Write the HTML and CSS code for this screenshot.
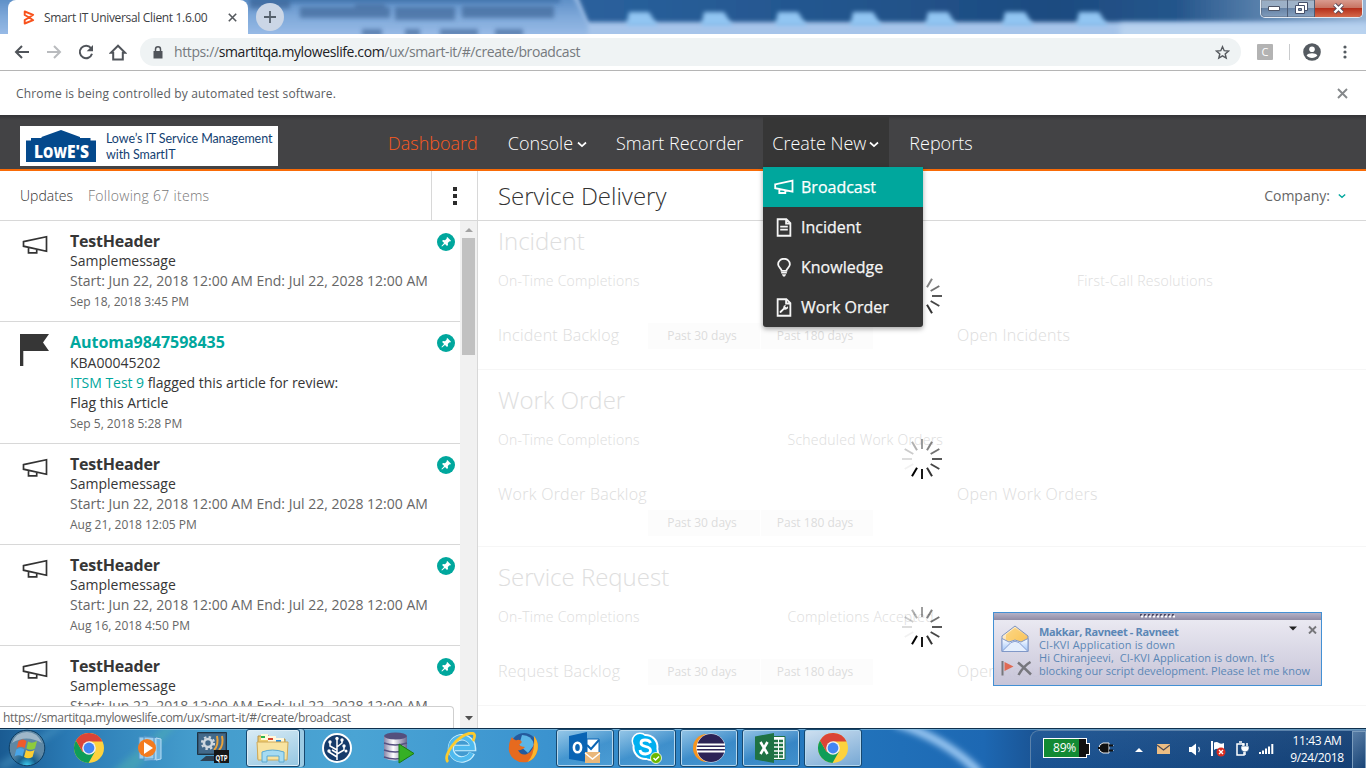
FILE: index.html
```html
<!DOCTYPE html>
<html lang="en">
<head>
<meta charset="utf-8">
<title>Smart IT Universal Client 1.6.00</title>
<link rel="stylesheet" href="styles.css">
</head>
<body>
<svg class="defs" width="0" height="0">
  <defs>
    <symbol id="horn" viewBox="0 0 26 20"><path d="M1.500 6.600 24.500 1.700v14.600L1.500 11.200zM6.500 12.400v5.400h8.200v-3.400" fill="none" stroke="currentColor" stroke-width="1.700"/></symbol>
    <symbol id="hornb" viewBox="0 0 20 16"><path d="M1.200 5.300 18.500 1.700v11L1.200 9.200zM5.300 10v4h6v-2.500" fill="none" stroke="currentColor" stroke-width="1.800"/></symbol>
    <symbol id="flag" viewBox="0 0 30 32"><path d="M0 0h29l-6 8.500 6 8.500H3.300V32H0z" fill="currentColor"/></symbol>
    <symbol id="pin" viewBox="0 0 18 18"><circle cx="9" cy="9" r="9" fill="#00a79d"/><path d="m10.300 4 3.700 3.700-.8.8-.7-.2-1.700 1.800.2 1.900-1 .9-2-2L5 13.600l-.6-.6 2.700-3-2-2 .9-.9 2 .2 1.800-1.700-.3-.7z" fill="#fff"/></symbol>
    <symbol id="doc" viewBox="0 0 16 20"><path d="M1.300 1.300h9.200l4.200 4.200v13.200H1.300zM10.200 1.500v4.300h4.300M4 9h8M4 12.300h8" fill="none" stroke="currentColor" stroke-width="1.900"/></symbol>
    <symbol id="wrench" viewBox="0 0 16 20"><path d="M1.300 1.300h9.200l4.200 4.200v13.200H1.300zM10.200 1.500v4.300h4.300" fill="none" stroke="currentColor" stroke-width="1.900"/><path d="m4.300 14.700 4.500-4.300" stroke="currentColor" stroke-width="2" stroke-linecap="round"/><path d="M12 8.800a2.500 2.500 0 1 1-2-1.500L9.200 9l1.200 1z" fill="currentColor"/></symbol>
    <symbol id="bulb" viewBox="0 0 16 20"><path d="M5.500 13.500c0-2.500-3.700-3.500-3.700-7a6.200 5.700 0 0 1 12.400 0c0 3.500-3.700 4.500-3.700 7z" fill="none" stroke="currentColor" stroke-width="1.900"/><path d="M5 14.800h6v1.600H5zM5.700 17.200h4.600L9 19.500H7z" fill="currentColor"/></symbol>
    <symbol id="chev" viewBox="0 0 10 7"><path d="m1 1.500 4 3.600 4-3.600" fill="none" stroke="currentColor" stroke-width="1.700"/></symbol>
    <symbol id="spin" viewBox="-21 -21 42 42">
      <g stroke="#000" stroke-width="2">
        <path d="M0-20v10" opacity=".38"/><path d="M0-20v10" opacity=".48" transform="rotate(30)"/>
        <path d="M0-20v10" opacity=".55" transform="rotate(60)"/><path d="M0-20v10" opacity=".65" transform="rotate(90)"/>
        <path d="M0-20v10" opacity=".72" transform="rotate(120)"/><path d="M0-20v10" opacity=".8" transform="rotate(150)"/>
        <path d="M0-20v10" opacity=".9" transform="rotate(180)"/><path d="M0-20v10" transform="rotate(210)"/>
        <path d="M0-20v10" opacity=".05" transform="rotate(240)"/><path d="M0-20v10" opacity=".13" transform="rotate(270)"/>
        <path d="M0-20v10" opacity=".2" transform="rotate(300)"/><path d="M0-20v10" opacity=".3" transform="rotate(330)"/>
      </g>
    </symbol>
    <symbol id="chrome" viewBox="0 0 30 30">
      <circle cx="15" cy="15" r="15" fill="#fdd23e"/>
      <path d="M2 7.500A15 15 0 0 0 14.500 30l6.500-11.500-6-3.500-6.500 3.700z" fill="#0f9d58"/>
      <path d="M2 7.500 8.500 18.700 15 15V8.500h13.500A15 15 0 0 0 2 7.500z" fill="#db4437"/>
      <circle cx="15" cy="15" r="6.800" fill="#f1f1f1"/><circle cx="15" cy="15" r="5.400" fill="#4285f4"/>
    </symbol>
  </defs>
</svg>
<div class="screen">
  <header class="titlebar">
    <svg class="glass" viewBox="0 0 1366 34" width="1366" height="34">
      <defs>
        <filter id="b3" x="-5%" y="-50%" width="110%" height="200%"><feGaussianBlur stdDeviation="3"/></filter>
        <filter id="b2" x="-5%" y="-50%" width="110%" height="200%"><feGaussianBlur stdDeviation="2"/></filter>
        <linearGradient id="gd"><stop offset="0" stop-color="#2a619d"/><stop offset=".6" stop-color="#1d4b80"/><stop offset=".75" stop-color="#24558b"/><stop offset=".86" stop-color="#5a82ad"/><stop offset="1" stop-color="#9db9d8"/></linearGradient>
        <linearGradient id="gl" x2="0" y2="1"><stop offset="0" stop-color="#4d82bd"/><stop offset=".5" stop-color="#7fa9da"/><stop offset="1" stop-color="#a5c4ec"/></linearGradient>
      </defs>
      <path d="M0 0h1366v34H0z" fill="#a6c4ea"/>
      <path d="M575-10h801v32H588z" fill="url(#gd)" filter="url(#b2)"/>
      <path d="M-10-10h580l18 34v20H-10z" fill="url(#gl)" filter="url(#b2)"/>
      <path d="M250-6h310v9H250z" fill="#3f6fa8" filter="url(#b2)" opacity=".8"/>
      <g fill="#375f91" filter="url(#b2)" opacity=".6">
        <path d="M250 0h40v9h-40zM300 7h90v11h-90zM355 4h30v14h-30zM395 7h60v13h-60zM462 6h92v12h-92zM362 29h20v7h-20zM405 29h15v7h-15zM440 29h38v7h-38zM495 29h28v7h-28z"/>
      </g>
      <g fill="#91c5f2" filter="url(#b2)">
        <path d="m629 12h20l9 14h-32zM704 12h20l9 14h-32zM778 12h20l9 14h-32zM853 12h20l9 14h-32zM928 12h20l9 14h-32zM1005 12h20l9 14h-32zM1079 12h20l9 14h-32z"/>
      </g>
      <path d="M1120 24h250v20h-250z" fill="#b9d3ef" filter="url(#b3)"/>
    </svg>
    <div class="tab">
      <svg class="fav" width="12" height="15" viewBox="0 0 12 15"><path d="M1.700 1.500v3.500l4.500 2.500-4.500 2.500v3.500l8.500-3.300-4-2.700 4-2.700z" fill="none" stroke="#f8521c" stroke-width="1.900" stroke-linejoin="round"/></svg>
      <span class="tab-title">Smart IT Universal Client 1.6.00</span>
      <svg width="9" height="9" viewBox="0 0 9 9"><path d="m.8.8 7.400 7.400M8.200.8.800 8.200" stroke="#55595e" stroke-width="1.600"/></svg>
    </div>
    <span class="newtab"><svg width="14" height="14" viewBox="0 0 14 14"><path d="M7 1v12M1 7h12" stroke="#55606c" stroke-width="1.800"/></svg></span>
    <div class="winbtns">
      <span class="wb"><svg width="12" height="6" viewBox="0 0 12 6"><path d="M.5.500h11v4H.5z" fill="#fff" stroke="#4d5466"/></svg></span>
      <span class="wb"><svg width="13" height="13" viewBox="0 0 13 13"><path d="M3.500.5h9v8h-9z" fill="#fff" stroke="#46506a"/><path d="M.5 3.500h9v8h-9z" fill="#fff" stroke="#46506a"/><path d="M3.500 6.500h3v2h-3z" fill="#7e93ab" stroke="#46506a"/></svg></span>
      <span class="wb close"><svg width="13" height="11" viewBox="0 0 13 11"><path d="m2.500 1.500 8 8M10.500 1.500l-8 8" stroke="#56495a" stroke-width="4.200"/><path d="m2.500 1.500 8 8M10.500 1.500l-8 8" stroke="#fff" stroke-width="2.400"/></svg></span>
    </div>
  </header>

  <div class="toolbar">
    <svg class="ti" width="16" height="14" viewBox="0 0 16 14"><path d="M15 7H2M8 1 2 7l6 6" fill="none" stroke="#50545a" stroke-width="2"/></svg>
    <svg class="ti" width="16" height="14" viewBox="0 0 16 14"><path d="M1 7h13M8 1l6 6-6 6" fill="none" stroke="#b9bbbe" stroke-width="2"/></svg>
    <svg class="ti" width="16" height="16" viewBox="0 0 16 16"><path d="M13 4.200A6.200 6.200 0 1 0 14 9.800" fill="none" stroke="#50545a" stroke-width="2"/><path d="M15 1v6.200H8.700z" fill="#50545a"/></svg>
    <svg class="ti" width="18" height="17" viewBox="0 0 18 17"><path d="M9 1.700 1.800 8.800h2.400V15.500h9.600V8.800h2.400z" fill="none" stroke="#50545a" stroke-width="2"/></svg>
    <div class="omni">
      <svg width="10" height="13" viewBox="0 0 10 13"><path d="M1 5h8.500v7.500H.5V5z" fill="#50545a"/><path d="M2.500 5.500V3.300a2.500 2.500 0 0 1 5 0v2.200" fill="none" stroke="#50545a" stroke-width="1.500"/></svg>
      <span class="url">https://<b>smartitqa.myloweslife.com</b>/ux/smart-it/#/create/broadcast</span>
      <svg class="star" width="15" height="15" viewBox="0 0 15 15"><path d="m7.500 1.700 1.700 4 4.300.4-3.300 2.800 1 4.200-3.700-2.200-3.700 2.200 1-4.200L1.500 6.100l4.300-.4z" fill="none" stroke="#55595e" stroke-width="1.400"/></svg>
    </div>
    <span class="ext">C</span>
    <span class="vsep"></span>
    <svg class="avatar" width="18" height="18" viewBox="0 0 18 18"><circle cx="9" cy="9" r="8.800" fill="#555b61"/><circle cx="9" cy="6.300" r="2.800" fill="#fff"/><path d="M3.600 12.500c1.500-3 9.300-3 10.800 0-2.400 3.300-8.400 3.300-10.800 0z" fill="#fff"/></svg>
    <svg width="4" height="14" viewBox="0 0 4 14" fill="#555b61"><circle cx="2" cy="2" r="1.600"/><circle cx="2" cy="7" r="1.600"/><circle cx="2" cy="12" r="1.600"/></svg>
  </div>

  <div class="infobar">
    <span class="info-text">Chrome is being controlled by automated test software.</span>
    <svg width="11" height="11" viewBox="0 0 11 11"><path d="m1 1 9 9M10 1l-9 9" stroke="#85888b" stroke-width="1.900"/></svg>
  </div>

  <div class="apphead">
    <div class="logo">
      <svg width="70" height="32" viewBox="0 0 70 32"><path d="M0 10.500h5V8h10.500V7L35 0l19 7v1h10.500v2.500H70V32H0z" fill="#04498c"/><text x="8" y="27.500" class="lowes" textLength="55" lengthAdjust="spacingAndGlyphs">L<tspan class="sm">OW</tspan>E'S</text></svg>
      <p class="logotext">Lowe’s IT Service Management<br>with SmartIT</p>
    </div>
    <nav class="nav">
      <a class="on">Dashboard</a>
      <a>Console<svg width="10" height="7"><use href="#chev"/></svg></a>
      <a class="rec">Smart Recorder</a>
      <a class="open">Create New<svg width="10" height="7"><use href="#chev"/></svg></a>
      <a>Reports</a>
    </nav>
    <ul class="menu">
      <li class="hot"><svg width="20" height="16"><use href="#hornb"/></svg>Broadcast</li>
      <li><svg width="20" height="19"><use href="#doc"/></svg>Incident</li>
      <li><svg width="20" height="19"><use href="#bulb"/></svg>Knowledge</li>
      <li><svg width="20" height="19"><use href="#wrench"/></svg>Work Order</li>
    </ul>
  </div>

  <main class="main">
    <section class="left">
      <div class="subhead">
        <span class="upd">Updates</span><span class="fol">Following 67 items</span>
        <span class="kebab"><i></i><i></i><i></i></span>
      </div>
      <div class="feedwrap">
        <div class="feed">
          <article class="item"><svg class="fi" width="26" height="20"><use href="#horn"/></svg><div class="txt"><h3>TestHeader</h3><p>Samplemessage</p><p class="g">Start: Jun 22, 2018 12:00 AM End: Jul 22, 2028 12:00 AM</p><p class="t">Sep 18, 2018 3:45 PM</p></div><svg class="pin" width="18" height="18"><use href="#pin"/></svg></article>
          <article class="item kb"><svg class="fl" width="30" height="32"><use href="#flag"/></svg><div class="txt"><h3 class="teal">Automa9847598435</h3><p>KBA00045202</p><p class="rev"><span class="teal">ITSM Test 9</span> flagged this article for review:</p><p>Flag this Article</p><p class="t">Sep 5, 2018 5:28 PM</p></div><svg class="pin" width="18" height="18"><use href="#pin"/></svg></article>
          <article class="item"><svg class="fi" width="26" height="20"><use href="#horn"/></svg><div class="txt"><h3>TestHeader</h3><p>Samplemessage</p><p class="g">Start: Jun 22, 2018 12:00 AM End: Jul 22, 2028 12:00 AM</p><p class="t">Aug 21, 2018 12:05 PM</p></div><svg class="pin" width="18" height="18"><use href="#pin"/></svg></article>
          <article class="item"><svg class="fi" width="26" height="20"><use href="#horn"/></svg><div class="txt"><h3>TestHeader</h3><p>Samplemessage</p><p class="g">Start: Jun 22, 2018 12:00 AM End: Jul 22, 2028 12:00 AM</p><p class="t">Aug 16, 2018 4:50 PM</p></div><svg class="pin" width="18" height="18"><use href="#pin"/></svg></article>
          <article class="item"><svg class="fi" width="26" height="20"><use href="#horn"/></svg><div class="txt"><h3>TestHeader</h3><p>Samplemessage</p><p class="g">Start: Jun 22, 2018 12:00 AM End: Jul 22, 2028 12:00 AM</p></div><svg class="pin" width="18" height="18"><use href="#pin"/></svg></article>
        </div>
        <div class="scroll">
          <svg width="8" height="4" viewBox="0 0 8 4"><path d="M0 4h8L4 0z" fill="#a3a3a3"/></svg>
          <span class="thumb"></span>
          <svg class="dn" width="8" height="5" viewBox="0 0 8 5"><path d="M0 0h8L4 4.500z" fill="#505050"/></svg>
        </div>
      </div>
      <div class="status">https://smartitqa.myloweslife.com/ux/smart-it/#/create/broadcast</div>
    </section>

    <section class="right">
      <div class="subhead r"><h1>Service Delivery</h1><span class="comp">Company:<svg width="8" height="6"><use href="#chev"/></svg></span></div>
      <div class="sec s1">
        <h2>Incident</h2>
        <div class="metrics"><span>On-Time Completions</span><span>Incidents Resolved</span><span>First-Call Resolutions</span></div>
        <div class="backlog"><span class="bt">Incident Backlog</span><span class="btns"><i>Past 30 days</i><i>Past 180 days</i></span><span class="opn">Open Incidents</span></div>
        <svg class="spin" width="42" height="42"><use href="#spin"/></svg>
      </div>
      <div class="sec s2">
        <h2>Work Order</h2>
        <div class="metrics"><span>On-Time Completions</span><span>Scheduled Work Orders</span></div>
        <div class="backlog wrap"><span class="bt">Work Order Backlog</span><span class="btns"><i>Past 30 days</i><i>Past 180 days</i></span><span class="opn">Open Work Orders</span></div>
        <svg class="spin" width="42" height="42"><use href="#spin"/></svg>
      </div>
      <div class="sec s3">
        <h2>Service Request</h2>
        <div class="metrics"><span>On-Time Completions</span><span>Completions Accepted</span></div>
        <div class="backlog"><span class="bt">Request Backlog</span><span class="btns"><i>Past 30 days</i><i>Past 180 days</i></span><span class="opn">Open Requests</span></div>
        <svg class="spin" width="42" height="42"><use href="#spin"/></svg>
      </div>
    </section>
  </main>

  <aside class="toast">
    <div class="grip"><svg width="35" height="4" viewBox="0 0 35 4"><path d="M0 1h35" stroke="#4e4a64" stroke-width="2" stroke-dasharray="2 2"/><path d="M1 2.500h35" stroke="#fff" stroke-width="2" stroke-dasharray="2 2"/></svg></div>
    <div class="tbody">
      <div class="ticons">
        <svg width="28" height="28" viewBox="0 0 28 28">
          <defs><linearGradient id="ev" x2="1" y2="1"><stop offset="0" stop-color="#fff"/><stop offset="1" stop-color="#f4a81d"/></linearGradient><linearGradient id="ev2" x2="0" y2="1"><stop offset="0" stop-color="#fff"/><stop offset="1" stop-color="#9cc4fb"/></linearGradient></defs>
          <path d="M1 11 14 1l13 10v15.500H1z" fill="url(#ev)" stroke="#7c93c0"/><path d="M5 9.500 14 3l9 6.500v6H5z" fill="#fbc95c" opacity=".7"/>
          <path d="M1 13.500 8 17l6-2 6 2 7-3.500v13H1z" fill="url(#ev2)" stroke="#8198c7"/><path d="M1.500 26 10 17.500q4-2.500 8 0l8.500 8.500" fill="#e4eefd" stroke="#869dd0"/></svg>
        <svg width="32" height="15" viewBox="0 0 32 15"><path d="M1.500 0v14.500" stroke="#77777b" stroke-width="2"/><path d="m3.500 1 9 4.500-9 4.500z" fill="#e06a53"/><path d="M17 1.500q6 5 13 12M29.500 1q-7 4-12 13" fill="none" stroke="#77777d" stroke-width="2.500"/></svg>
      </div>
      <div class="tmsg"><b>Makkar, Ravneet - Ravneet</b><span class="m1">CI-KVI Application is down</span><span class="m2">Hi Chiranjeevi,&nbsp; CI-KVI Application is down. It’s</span><span class="m3">blocking our script development. Please let me know</span></div>
      <svg class="tctl" width="28" height="9" viewBox="0 0 28 9"><path d="M0 1.500h8L4 5.500z" fill="#222"/><path d="m20 1.500 7 7M27 1.500l-7 7" stroke="#77777b" stroke-width="1.900"/></svg>
    </div>
  </aside>

  <footer class="taskbar">
    <svg class="wall" width="1366" height="40" viewBox="0 0 1366 40">
      <defs><filter id="w"><feGaussianBlur stdDeviation="3"/></filter>
      <linearGradient id="wg"><stop offset="0" stop-color="#1a5b92"/><stop offset=".05" stop-color="#2a7ab4"/><stop offset=".14" stop-color="#449ccc"/><stop offset=".26" stop-color="#4aa4d4"/><stop offset=".4" stop-color="#3b93cf"/><stop offset=".6" stop-color="#2376bd"/><stop offset=".72" stop-color="#1d68b3"/><stop offset=".76" stop-color="#1a5393"/><stop offset="1" stop-color="#123c70"/></linearGradient></defs>
      <path d="M0 0h1366v40H0z" fill="url(#wg)"/>
      <path d="m110 45 60-50 8 0-45 50z" fill="#53b6ae" opacity=".45" filter="url(#w)"/>
      <path d="m-5 38 60-40h10L5 42z" fill="#58a6ce" opacity=".4" filter="url(#w)"/>
      <path d="M895-5q50 15 85 50" fill="none" stroke="#a0ccf5" stroke-width="8" filter="url(#w)"/>
      <path d="M0 .5h1366" stroke="#0f304d"/><path d="M0 1.500h1366" stroke="#8ac0df" opacity=".7"/>
    </svg>
    <div class="apps">
      <span class="app start"><svg width="38" height="38" viewBox="0 0 38 38">
        <defs><radialGradient id="orb" cx=".5" cy="1"><stop offset="0" stop-color="#3fd2f3"/><stop offset=".5" stop-color="#19618f"/><stop offset="1" stop-color="#5f88a5"/></radialGradient></defs>
        <circle cx="19" cy="19" r="17.800" fill="url(#orb)" stroke="#0e3e63"/><path d="M4 14Q18 5 34 14 29 3 19 3 8 3 4 14z" fill="#fff" opacity=".4"/>
        <path d="M10.500 12q4.500-3 8 0l-1.800 7q-4-2.500-8 0z" fill="#ef5b2b"/><path d="M20 12.500q3.500 2.500 9-.5l-2 7.500q-4.500 2.500-8.500 0z" fill="#8dcb3c"/><path d="M8.300 20.500q4-3 8 0l-1.800 7q-4-2.500-8 0z" fill="#49a5e8"/><path d="M18 21q4 2.500 8.500 0l-2 7q-4.500 2.500-8.500 0z" fill="#fccd33"/></svg></span>
      <span class="app"><svg width="30" height="30"><use href="#chrome"/></svg></span>
      <span class="app media"><svg width="29" height="26" viewBox="0 0 29 26"><path d="M8 1l15 2v22L8 26zM3 2h15v22H3z" fill="#9fcdec" stroke="#4d94c8"/><path d="M20 3l5 1v20l-5 1z" fill="#6fb3de" stroke="#b7dcf3"/><circle cx="11" cy="13" r="9" fill="#f47b20"/><path d="m8 7 9 6-9 6z" fill="#fff"/></svg></span>
      <span class="app"><svg width="32" height="32" viewBox="0 0 32 32"><path d="M.5.500h29v22H.5z" fill="#35566f" stroke="#1e3344"/><path d="M2 2h26v19H2z" fill="#42698a"/><path d="M9 24h10l4 5H3z" fill="#2e4254"/><circle cx="11" cy="11" r="4" fill="none" stroke="#cfd8df" stroke-width="2.600"/><circle cx="11" cy="11" r="6" fill="none" stroke="#cfd8df" stroke-width="2.200" stroke-dasharray="2.400 2.300"/><path d="M17 18q5-5 3-14M22 18q5-5 3-14" fill="none" stroke="#e9a33b" stroke-width="2"/><path d="M17 18h15v13H17z" fill="#161616"/><text x="18.500" y="28.500" class="qtp" textLength="12" lengthAdjust="spacingAndGlyphs">QTP</text></svg></span>
      <span class="app box stack"><svg width="34" height="30" viewBox="0 0 34 30"><path d="M2 3h11l2 3h14v20H2z" fill="#eecb6c" stroke="#b5924a"/><path d="M5 1h7v6H5zM12 3h8v6h-8zM20 5h8v5h-8z" fill="#fff8dc"/><path d="M5 3h4v2H5z" fill="#29b34a"/><path d="M12 5h5v2h-5z" fill="#d9432d"/><path d="M20 7h5v2h-5z" fill="#2a8fe0"/><path d="M1 9h31l-1 18H2z" fill="#f8e3a0" stroke="#d0aa58"/><path d="M6 29V19q10-4 22 0v10h-5v-6H11v6z" fill="#a5dbf2" stroke="#5ba9d2"/></svg></span>
      <span class="app"><svg width="30" height="30" viewBox="0 0 30 30"><circle cx="15" cy="15" r="14" fill="#153b6b" stroke="#fff" stroke-width="2"/><path d="M15 27V6M15 21l7-4v-4M15 17l-7-4V9M15 24l-8-5M15 14l5-4V7M15 20l-5-3" stroke="#fff" stroke-width="1.500" fill="none"/><g fill="#fff"><circle cx="15" cy="5.500" r="1.700"/><circle cx="22" cy="13" r="1.700"/><circle cx="8" cy="9" r="1.700"/><circle cx="7" cy="18" r="1.700"/><circle cx="20" cy="7" r="1.700"/><circle cx="24" cy="18" r="1.500"/></g></svg></span>
      <span class="app"><svg width="32" height="32" viewBox="0 0 32 32"><defs><linearGradient id="db"><stop offset="0" stop-color="#8884a8"/><stop offset=".4" stop-color="#fff"/><stop offset="1" stop-color="#6a668e"/></linearGradient></defs><path d="M1 4v22q10 5 23 0V4z" fill="url(#db)"/><ellipse cx="12.500" cy="4" rx="11.500" ry="3.500" fill="#544f7d"/><path d="M1 11q11 4 23 0M1 18q11 4 23 0M1 25q11 4 23 0" fill="none" stroke="#565180" stroke-width="1.500"/><path d="m16 12 15 9.500L16 31z" fill="#35b024" stroke="#1b7a12"/></svg></span>
      <span class="app"><svg width="32" height="32" viewBox="0 0 32 32"><path d="M27 21A11 11 0 1 1 28 16H10" fill="none" stroke="#c9eefd" stroke-width="6.500"/><path d="M26.500 21A11 11 0 1 1 27.500 16H10" fill="none" stroke="#4fb9ee" stroke-width="4.500"/><path d="M3 30C-3 24 12 3 26 1q6 0 2 8" fill="none" stroke="#fbcb2f" stroke-width="2.800"/></svg></span>
      <span class="app"><svg width="30" height="30" viewBox="0 0 30 30"><circle cx="16" cy="13" r="13" fill="#245a9d"/><path d="M14 2q10 0 12 10l-6 8-9-8z" fill="#5bb5e6"/><path d="M26 3q5 6 3.500 14A14.500 14.500 0 0 1 1 18Q0 10 4 4q2 4 5 3 3-1 5 2l-3 3q3 2 6 2-3 4-7 3 3 6 9 4 8-3 7-18z" fill="#e66a1e"/><path d="M26 3q5 6 3.500 14-2 9-10 12 8-8 6.500-26z" fill="#fbb62c"/></svg></span>
      <span class="app box"><svg width="32" height="32" viewBox="0 0 32 32"><path d="M0 4 18 0v30L0 27z" fill="#0a64b4"/><ellipse cx="8.500" cy="15.500" rx="3.600" ry="4.800" fill="none" stroke="#fff" stroke-width="2.600"/><path d="M18 7h12v14H18z" fill="#fff" stroke="#0a64b4"/><path d="m18 13 4 4 8-9" fill="none" stroke="#0a64b4" stroke-width="2"/><path d="M16 20h15v11H16z" fill="#e9b77a"/><path d="m16 21 7.500 6 7.500-6" fill="none" stroke="#fff" stroke-width="1.500"/></svg></span>
      <span class="app box"><svg width="32" height="32" viewBox="0 0 32 32"><circle cx="9" cy="9" r="8.500" fill="#fff"/><circle cx="20" cy="21" r="8" fill="#fff"/><circle cx="14.500" cy="15" r="13" fill="#fff"/><circle cx="9" cy="9" r="7" fill="#00aff0"/><circle cx="19" cy="20" r="7" fill="#00aff0"/><circle cx="14.500" cy="15" r="11" fill="#00aff0"/><path d="M19.500 11q-1-3-5.500-3-4 0-4 3 0 2.500 4.500 3.500 5 1 5 4T14.500 22q-5 0-5.500-4" fill="none" stroke="#fff" stroke-width="2.800"/><circle cx="25" cy="26" r="5.500" fill="#6bb700" stroke="#fff" stroke-width=".8"/><path d="m22.500 26 2 2 3.500-3.500" fill="none" stroke="#fff" stroke-width="1.500"/></svg></span>
      <span class="app box"><svg width="32" height="30" viewBox="0 0 32 30"><circle cx="14" cy="15" r="14" fill="#f7941e"/><circle cx="18" cy="15" r="14.500" fill="#dfe4ef"/><circle cx="18" cy="15" r="14" fill="#2c2255"/><path d="M4 11.500h28M3.500 15h28.500M4 18.500h28" stroke="#fff" stroke-width="1.900"/></svg></span>
      <span class="app box"><svg width="32" height="30" viewBox="0 0 32 30"><path d="M16 3.500h14v23H16z" fill="#fff" stroke="#1f7244"/><path d="M19 8h9M19 12h9M19 16h9M19 20h9M19 23.500h9" stroke="#1f7244" stroke-width="2.500"/><path d="M23.500 5v20" stroke="#fff"/><path d="M0 3.500 19 0v30L0 26.500z" fill="#1f7244"/><path d="m5.500 9 7 12M12.500 9l-7 12" stroke="#fff" stroke-width="2.600"/></svg></span>
      <span class="app box act"><svg width="30" height="30"><use href="#chrome"/></svg></span>
    </div>
    <div class="tray">
      <span class="batt"><span>89%</span></span>
      <svg class="plug" width="16" height="12" viewBox="0 0 16 12"><path d="M5 1h6v10H5Q1 10 1 6t4-5zM11 3.500h4.500M11 8.500h4.500" fill="#101010" stroke="#fff" stroke-width=".9"/><path d="M11 3.500h4M11 8.500h4M0 6h4" stroke="#101010" stroke-width="2"/></svg>
      <svg class="up" width="8" height="4" viewBox="0 0 8 4"><path d="M0 4h8L4 0z" fill="#fff"/></svg>
      <svg class="mail" width="13" height="10" viewBox="0 0 13 10"><path d="M0 0h13v10H0z" fill="#ecbd83"/><path d="m0 1 6.500 5L13 1" fill="none" stroke="#4a4a55" stroke-width="1.200"/></svg>
      <svg class="vol" width="13" height="13" viewBox="0 0 13 13"><path d="M0 4h2.500L7 .5v12L2.500 9H0z" fill="#fff"/><path d="M9.500 4q2 2.500 0 5" fill="none" stroke="#c8d6e6" stroke-width="1.300"/></svg>
      <svg class="act-c" width="15" height="16" viewBox="0 0 15 16"><path d="M1 0v15" stroke="#fff" stroke-width="2"/><path d="M3 1.500q3-1 5 .5t5 0v7q-3 1-5-.5t-5 .5z" fill="#fff"/><circle cx="10" cy="11" r="4.500" fill="#d92c20"/><path d="m8 9 4 4M12 9l-4 4" stroke="#fff" stroke-width="1.300"/></svg>
      <svg class="pwr" width="14" height="15" viewBox="0 0 14 15"><path d="M1 3h7v11H1zM3 1h3" fill="none" stroke="#fff" stroke-width="1.500"/><path d="M5 5h8v3q-1 3-4 3t-4-3z" fill="#fff" stroke="#174679" stroke-width=".6"/><path d="M7 2v3M11 2v3M9 11v3" stroke="#fff" stroke-width="1.500"/></svg>
      <svg class="net" width="15" height="10" viewBox="0 0 15 10"><path d="M1 10V8M4 10V6.500M7 10V4.500M10 10V2.500M13.300 10V0" stroke="#fff" stroke-width="2"/></svg>
      <div class="clock"><span>11:43 AM</span><span>9/24/2018</span></div>
      <span class="desk"></span>
    </div>
  </footer>
</div>
</body>
</html>
```
FILE: styles.css
```css
* { box-sizing: border-box; margin: 0; padding: 0; }
body { background: #fff; font-family: "Open Sans", "Noto Sans", sans-serif; }
svg { flex: none; display: block; }
.defs { position: absolute; }
.screen { position: relative; width: 1366px; height: 768px; overflow: hidden; display: flex; flex-direction: column; color: #333; }

/* window frame */
.titlebar { position: relative; height: 34px; flex: none; display: flex; padding-left: 8px; }
.glass { position: absolute; left: 0; top: 0; }
.tab { position: relative; width: 240px; height: 34px; background: #fff; border-radius: 8px 8px 0 0; display: flex; align-items: center; padding-left: 15px; }
.fav { margin-right: 9px; }
.tab-title { width: 184px; font-size: 12px; letter-spacing: -.33px; color: #3c4043; white-space: nowrap; }
.newtab { position: relative; width: 28px; height: 28px; margin: 3px 0 0 8px; border-radius: 50%; background: #cbd6e6; display: flex; align-items: center; justify-content: center; }
.winbtns { position: relative; display: flex; height: 18px; margin-left: auto; margin-right: 3px; border: 1px solid #e2e9f2; border-top: 0; border-radius: 0 0 5px 5px; overflow: hidden; box-shadow: inset 0 0 0 1px #33425a; }
.wb { width: 27px; display: flex; align-items: center; justify-content: center; background: linear-gradient(#b8c3d0aa 45%, #69809faa 50%, #93a9c4aa); border-right: 1px solid #4c5c75; }
.wb.close { width: 47px; border: 0; background: linear-gradient(#d99b8e 0, #c87563 45%, #b6301b 50%, #d4694a); }

.toolbar { height: 37px; flex: none; background: #fff; border-bottom: 1px solid #b5b5b5; display: flex; align-items: center; padding-left: 14px; }
.ti { margin-right: 16px; }
.ti:nth-child(3) { margin-right: 15px; }
.omni { width: 1101px; height: 28px; margin-left: -3px; background: #eff3f4; border-radius: 14px; display: flex; align-items: center; padding: 0 11px 0 13px; }
.url { margin: -1px 0 0 11px; font-size: 14px; letter-spacing: -.39px; color: #767a7e; white-space: nowrap; }
.url b { font-weight: 400; color: #202124; }
.star { margin-left: auto; }
.ext { width: 16px; height: 16px; margin-left: 16px; background: #b3b3b3; border-radius: 1px; color: #fff; font-size: 11px; line-height: 16px; text-align: center; }
.vsep { width: 1px; height: 16px; background: #c9cbcd; margin: 0 13px 0 16px; }
.avatar { margin-right: 22px; }

.infobar { height: 44px; flex: none; background: #fff; display: flex; align-items: center; justify-content: space-between; padding: 0 18px 0 16px; }
.info-text { font-size: 12px; color: #5a5d61; letter-spacing: .16px; }

/* application header */
.apphead { position: relative; z-index: 3; height: 56px; flex: none; background: linear-gradient(#333336, #434345 5px); border-bottom: 2px solid #f96b07; display: flex; }
.logo { width: 258px; height: 40px; margin: 11px 0 0 20px; background: #fff; display: flex; padding: 4px 0 0 6px; }
.lowes { font: 800 18px "Open Sans", sans-serif; fill: #fff; }
.lowes .sm { font-size: 15px; }
.logotext { margin: 1px 0 0 10px; font: 12.500px/16px Lato, sans-serif; letter-spacing: -.09px; color: #143f72; white-space: nowrap; }
.nav { display: flex; gap: 10px; margin: 2px 0 0 100px; height: 50px; }
.nav a { display: flex; align-items: center; padding: 2px 10px 0; font-size: 18px; font-weight: 300; color: #fff; white-space: nowrap; }
.nav a svg { margin: 3px 0 0 4px; }
.nav .rec { margin: 0 0 0 -1px; }
.nav .on { color: #fc5a1f; }
.nav .open { background: #363636; width: 126px; padding-left: 9px; }
.nav .open svg { margin-left: 3px; }
.menu { position: absolute; left: 763px; top: 52px; width: 160px; height: 160px; background: #363636; border-radius: 0 0 3px 3px; box-shadow: 0 2px 5px rgba(0,0,0,.35); list-style: none; overflow: hidden; }
.menu li { height: 40px; display: flex; align-items: center; gap: 7px; padding-left: 11px; color: #f5f5f5; font-size: 16px; -webkit-text-stroke: .25px currentColor; }
.menu .hot { background: #00a79d; color: #fff; }

/* columns */
.main { height: 557px; flex: none; display: flex; }
.left { position: relative; width: 478px; border-right: 1px solid #d8d8d8; display: flex; flex-direction: column; }
.subhead { height: 50px; flex: none; border-bottom: 1px solid #d8d8d8; display: flex; align-items: center; padding-left: 20px; font-size: 14px; font-weight: 300; white-space: nowrap; }
.fol { margin-left: 15px; color: #777; letter-spacing: .28px; }
.kebab { margin-left: auto; width: 46px; height: 100%; border-left: 1px solid #d8d8d8; display: flex; flex-direction: column; gap: 3px; align-items: center; justify-content: center; }
.kebab i { width: 4px; height: 4px; background: #2b2b2b; }
.feedwrap { flex: 1; min-height: 0; display: flex; }
.feed { width: 460px; overflow: hidden; }
.item { display: flex; align-items: flex-start; height: 101px; padding: 10px 5px 0 22px; border-bottom: 1px solid #d8d8d8; }
.item.kb { height: 122px; padding-left: 20px; }
.fi { margin-top: 4px; color: #333; }
.fl { margin-top: 2px; color: #363636; margin-right: -2px; }
.txt { flex: 1; margin-left: 22px; line-height: 20px; font-size: 14px; white-space: nowrap; color: #363636; }
.txt h3 { font-size: 16px; font-weight: 700; line-height: 20px; letter-spacing: -.2px; }
.txt h3.teal { line-height: 21px; letter-spacing: -.03px; }
.txt .rev { letter-spacing: -.03px; }
.txt .g { color: #666; }
.txt .t { font-size: 12px; line-height: 22px; color: #666; }
.txt .teal { color: #00a79d; }
.pin { margin: 2px 0 0 -1px; }
.scroll { width: 17px; background: #f1f1f1; display: flex; flex-direction: column; align-items: center; padding-top: 7px; }
.thumb { width: 13px; height: 117px; margin-top: 6px; background: #c1c1c1; }
.dn { margin: auto 0 7px; }
.status { position: absolute; left: 0; bottom: 0; width: 454px; height: 22px; background: #fff; border: 1px solid #cfcfcf; border-width: 1px 1px 0 0; border-radius: 0 4px 0 0; padding-left: 3px; font-size: 12px; line-height: 22px; letter-spacing: -.34px; color: #666; white-space: nowrap; }

.right { width: 888px; }
.subhead.r h1 { font-size: 24px; font-weight: 300; }
.comp { margin-left: auto; display: flex; align-items: center; gap: 8px; padding-right: 20px; font-weight: 400; color: #666; }
.comp svg { color: #00a79d; }
.sec { position: relative; padding-left: 20px; border-bottom: 1px solid #f6f6f6; color: #ddd; white-space: nowrap; }
.s1 { height: 149px; padding-top: 3px; }
.s2 { height: 177px; padding-top: 13px; }
.s3 { height: 159px; padding-top: 13px; }
.sec h2 { height: 34px; line-height: 34px; font-size: 24px; font-weight: 300; color: #dedede; }
.metrics { display: grid; grid-template-columns: 289.500px 289.500px 1fr; height: 40px; line-height: 46px; font-size: 14px; font-weight: 300; letter-spacing: .25px; }
.backlog { display: grid; grid-template-columns: 150px 309px 1fr; margin-top: 21px; line-height: 32px; font-size: 16px; font-weight: 300; letter-spacing: .27px; }
.btns { display: flex; height: 26px; margin-top: 4px; }
.btns i { width: 112px; background: #fcfcfc; font: 400 12px/26px "Open Sans", sans-serif; letter-spacing: 0; text-align: center; padding-right: 4px; margin-right: 1px; }
.wrap .btns { margin-top: 32px; }
.spin { position: absolute; left: 423px; top: 54px; }
.s2 .spin { top: 68px; }
.s3 .spin { top: 59px; }

/* mail notification */
.toast { position: absolute; left: 993px; top: 612px; width: 329px; height: 74px; z-index: 4; border: 1px solid #4390d4; background: linear-gradient(#ecebf3ec, #c3c0d5ec); }
.grip { height: 7px; background: linear-gradient(#b5b1c6, #8f8ba5); display: flex; justify-content: center; padding-top: 1px; }
.tbody { display: flex; padding: 5px 4px 0 7px; }
.ticons { width: 38px; display: flex; flex-direction: column; gap: 8px; }
.tmsg { flex: 1; min-width: 0; display: flex; flex-direction: column; font-size: 11px; line-height: 13px; color: #5b87b6; white-space: nowrap; }
.tmsg b { letter-spacing: -.34px; }
.tmsg .m1 { letter-spacing: .14px; }
.tmsg .m2 { letter-spacing: .07px; }
.tmsg .m3 { letter-spacing: .03px; }
.tctl { margin: 0 0 0 -30px; }

/* taskbar */
.taskbar { position: relative; z-index: 5; height: 40px; flex: none; display: flex; }
.wall { position: absolute; left: 0; top: 0; }
.apps { position: relative; display: flex; padding-top: 1px; }
.app { width: 58px; height: 38px; margin: 0 2px; display: flex; align-items: center; justify-content: center; }
.start { width: 54px; margin: 0 4px 0 0; }
.media { padding-right: 2px; }
.box { border: 1px solid #17486f; border-radius: 3px; box-shadow: inset 0 0 0 1px #b5d8ef; background: linear-gradient(160deg, #b9dcf2bb, #5aa0d355 55%, #6db5e266); }
.stack { background: linear-gradient(160deg, #e4f1f8ee, #a8d0e6cc); width: 54px; margin-right: 6px; box-shadow: inset 0 0 0 1px #dceef8, 4px 0 0 #9ccbe4, 5px 0 0 #17486f; }
.act { background: linear-gradient(160deg, #dbe8f4ee, #8ab4dacc); }
.qtp { font: 700 9px "Open Sans", sans-serif; fill: #fff; }
.tray { position: relative; margin: 2px 0 0 auto; width: 336px; height: 38px; border: 1px solid #5b82ab; border-width: 1px 0 0 1px; border-radius: 9px 0 0 0; background: linear-gradient(#4c76a433, #1f4f8522); display: flex; align-items: center; padding: 0 0 3px 12px; }
.batt { position: relative; width: 44px; height: 20px; border: 1px solid #fff; background: linear-gradient(90deg, #128a33 84%, #111 84%); color: #fff; font-size: 12px; line-height: 18px; padding-left: 9px; letter-spacing: -.2px; }
.batt::after { content: ""; position: absolute; right: -4px; top: 4px; width: 3px; height: 10px; border: 1px solid #fff; border-left: 0; background: #111; }
.plug { margin-left: 11px; }
.up { margin: 3px 0 0 21px; }
.mail { margin: 2px 0 0 14px; }
.vol { margin: 2px 0 0 19px; }
.act-c { margin: 2px 0 0 9px; }
.pwr { margin-left: 10px; }
.net { margin: 2px 0 0 9px; }
.clock { margin: 1px 0 0 14px; width: 58px; color: #fff; font-size: 12px; line-height: 17px; letter-spacing: -.38px; display: flex; flex-direction: column; align-items: center; white-space: nowrap; }
.desk { width: 14px; height: 38px; margin: 0 0 -3px auto; border: 1px solid #7c9dbd; background: linear-gradient(135deg, #7fa0c199, #1c477899); }
```
